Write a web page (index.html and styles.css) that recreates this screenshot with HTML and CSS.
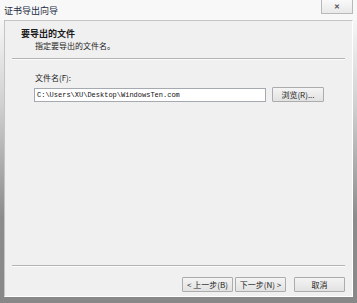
FILE: index.html
```html
<!DOCTYPE html>
<html lang="zh-CN">
<head>
    <meta charset="UTF-8">
    <title>证书导出向导</title>
    <link rel="stylesheet" href="styles.css">
</head>
<body>
    <div class="window">
        <div class="titlebar">
            <span class="caption">证书导出向导</span>
            <button class="close">&#x2715;</button>
        </div>
        <div class="frame">
            <div class="panel">
                <div class="header">
                    <div class="header-title">要导出的文件</div>
                    <div class="header-sub">指定要导出的文件名。</div>
                </div>
                <div class="sep"></div>
                <div class="content">
                    <div class="label">文件名(F):</div>
                    <div class="file-row">
                        <div class="input">C:\Users\XU\Desktop\WindowsTen.com</div>
                        <button class="btn browse">浏览(R)...</button>
                    </div>
                </div>
                <div class="footer">
                    <div class="sep"></div>
                    <div class="buttons">
                        <button class="btn">&lt; 上一步(B)</button>
                        <button class="btn next">下一步(N) &gt;</button>
                        <button class="btn cancel">取消</button>
                    </div>
                </div>
            </div>
        </div>
    </div>
</body>
</html>
```

FILE: styles.css
```css
body {
    margin: 0;
    font-family: "Noto Sans CJK SC", "DejaVu Sans", sans-serif;
    font-size: 8px;
    color: #1c1c1c;
    background: #8c8c8c;
}
.window {
    width: 357px;
    height: 303px;
    display: flex;
    flex-direction: column;
}
.titlebar {
    height: 20px;
    display: flex;
    align-items: flex-start;
    justify-content: space-between;
    background: #f8f8f8;
}
.caption {
    font-size: 9px;
    line-height: 11px;
    padding: 5px 0 0 4px;
    color: #1d2a44;
}
.close {
    width: 32px;
    height: 14px;
    margin-right: 4px;
    padding: 0;
    border: 1px solid #b9b9b9;
    border-top: none;
    background: linear-gradient(#f9f9f9, #e9e9e9);
    color: #555;
    font-size: 7px;
    font-weight: bold;
    line-height: 12px;
}
.frame {
    flex: 1;
    display: flex;
    padding: 0 4px 6px 4px;
    background: linear-gradient(#f6f6f6 0%, #d0d0d0 30%, #8c8c8c 70%, #888 100%);
}
.panel {
    flex: 1;
    display: flex;
    flex-direction: column;
    background: #f0f0f0;
    border: 1px solid #c4c4c4;
    border-right-color: #fff;
    border-bottom-color: #fff;
}
.header {
    padding: 7px 0 0 16px;
    line-height: 11px;
}
.header-title {
    font-size: 9px;
    font-weight: bold;
}
.header-sub {
    padding: 1px 0 0 14px;
}
.sep {
    height: 1px;
    margin: 7px 7px 0 7px;
    background: #b4b4b4;
    border-bottom: 1px solid #fbfbfb;
}
.content {
    padding: 12px 0 0 30px;
}
.label {
    line-height: 11px;
}
.file-row {
    display: flex;
    align-items: center;
    gap: 6px;
    margin-top: 4px;
    margin-left: -1px;
}
.input {
    width: 228px;
    height: 12px;
    padding-left: 2px;
    border: 1px solid #a5a9b0;
    background: #fff;
    font-family: "Liberation Mono", monospace;
    font-size: 7px;
    line-height: 12px;
    color: #111;
    white-space: nowrap;
    overflow: hidden;
}
.btn {
    width: 51px;
    height: 15px;
    padding: 0;
    border: 1px solid #acacac;
    border-radius: 1px;
    background: linear-gradient(#f4f4f4, #e2e2e2);
    font-family: "Noto Sans CJK SC", "DejaVu Sans", sans-serif;
    font-size: 8px;
    line-height: 12px;
    color: #1c1c1c;
}
.browse {
    width: 52px;
    height: 15px;
}
.footer {
    margin-top: auto;
}
.buttons {
    display: flex;
    justify-content: flex-end;
    gap: 2px;
    padding: 10px 7px 4px 0;
}
.cancel {
    margin-left: 6px;
}
```
